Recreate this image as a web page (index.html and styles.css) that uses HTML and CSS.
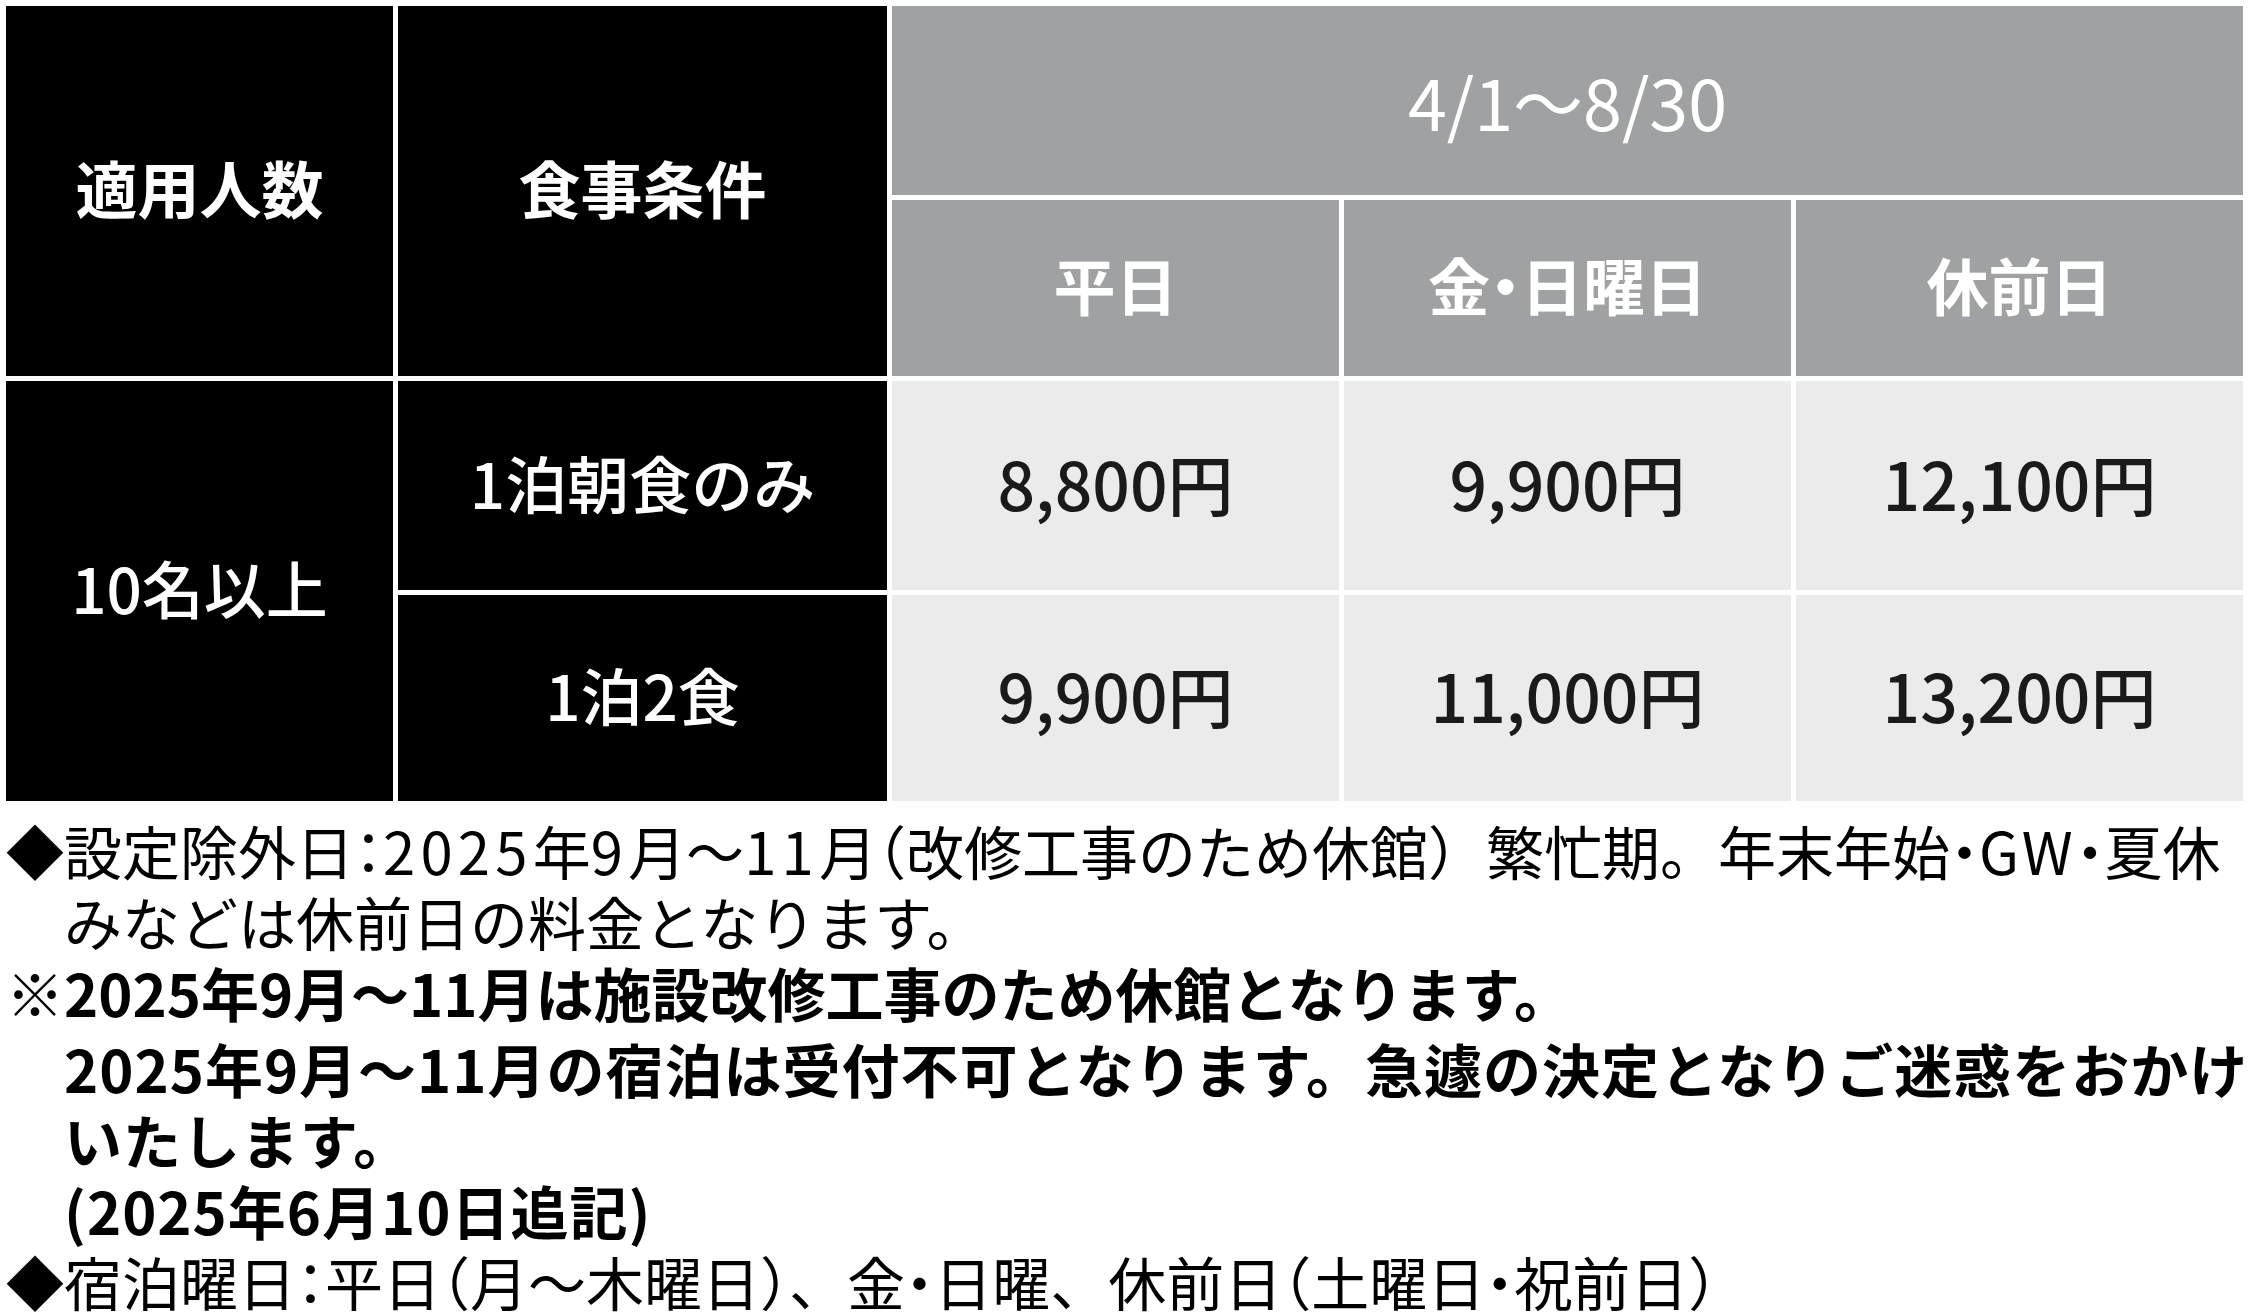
FILE: index.html
```html
<!DOCTYPE html>
<html lang="ja">
<head>
<meta charset="utf-8">
<title>料金表</title>
<link rel="stylesheet" href="styles.css">
</head>
<body>
<div class="page">
  <div class="rate-table">
    <div class="cell dark head span-rows-2 c1">適用人数</div>
    <div class="cell dark head span-rows-2 c2">食事条件</div>
    <div class="cell gray period">4/1〜8/30</div>
    <div class="cell gray head c3">平日</div>
    <div class="cell gray head c4">金<span class="hw">・</span>日曜日</div>
    <div class="cell gray head c5">休前日</div>
    <div class="cell dark data span-rows-data c1">10名以上</div>
    <div class="cell dark data c2">1泊朝食のみ</div>
    <div class="cell light price c3">8,800円</div>
    <div class="cell light price c4">9,900円</div>
    <div class="cell light price c5">12,100円</div>
    <div class="cell dark data c2">1泊2食</div>
    <div class="cell light price c3">9,900円</div>
    <div class="cell light price c4">11,000円</div>
    <div class="cell light price c5">13,200円</div>
  </div>
  <div class="notes">
    <p class="note">◆設定除外日<span class="hw">：</span><span class="num">2025</span>年<span class="num">9</span>月〜<span class="num">11</span>月<span class="hw">（</span>改修工事のため休館）繁忙期。年末年始<span class="hw">・</span><span class="latin">GW</span><span class="hw">・</span>夏休<br>みなどは休前日の料金となります。</p>
    <p class="note bold"><span class="mark">※</span>2025年9月〜11月は施設改修工事のため休館となります。</p>
    <p class="note bold second">2025年9月〜11月の宿泊は受付不可となります。急遽の決定となりご迷惑をおかけ<br>いたします。<br>(2025年6月10日追記)</p>
    <p class="note">◆宿泊曜日<span class="hw">：</span>平日<span class="hw">（</span>月〜木曜日<span class="hw">）</span>、金<span class="hw">・</span>日曜、休前日<span class="hw">（</span>土曜日<span class="hw">・</span>祝前日<span class="hw">）</span></p>
  </div>
</div>
</body>
</html>
```

FILE: styles.css
```css
html, body {
  margin: 0;
  padding: 0;
  background: #ffffff;
}

body {
  font-family: "Noto Sans CJK JP", "Noto Sans", sans-serif;
  color: #000000;
}

.page {
  padding: 6px 6px 0 6px;
}

.rate-table {
  display: grid;
  grid-template-columns: 387px 489px 1fr 1fr 1fr;
  grid-template-rows: 189px 176px 209px 206px;
  column-gap: 5px;
  row-gap: 5px;
  width: 2237px;
}

.cell {
  display: flex;
  align-items: center;
  justify-content: center;
  white-space: nowrap;
}

.dark {
  background: #000000;
  color: #ffffff;
}

.gray {
  background: #a0a1a3;
  color: #ffffff;
}

.light {
  background: #ebebeb;
  color: #1a1a1a;
}

.c1 { grid-column: 1; }
.c2 { grid-column: 2; }
.c3 { grid-column: 3; }
.c4 { grid-column: 4; }
.c5 { grid-column: 5; }

.span-rows-2 {
  grid-row: 1 / span 2;
}

.span-rows-data {
  grid-row: 3 / span 2;
}

.period {
  grid-column: 3 / span 3;
  grid-row: 1;
  font-size: 70px;
  font-weight: 400;
}

.head {
  font-size: 62px;
  font-weight: 700;
  padding-bottom: 8px;
}

.data {
  font-size: 62px;
  font-weight: 500;
  padding-bottom: 8px;
}

.price {
  font-size: 66px;
  font-weight: 500;
  padding-bottom: 8px;
}

.hw {
  font-feature-settings: "halt" 1;
}

.num {
  letter-spacing: 0.09em;
}

.latin {
  letter-spacing: 0.05em;
}

.notes {
  margin-top: 14px;
  white-space: nowrap;
}

.note {
  margin: 0;
  font-size: 58px;
  line-height: 71px;
  padding-left: 1em;
  text-indent: -1em;
}

.note.bold {
  font-weight: 700;
}

.mark {
  font-weight: 400;
}

.note.second {
  margin-top: 5px;
  text-indent: 0;
  letter-spacing: 1px;
}
```
